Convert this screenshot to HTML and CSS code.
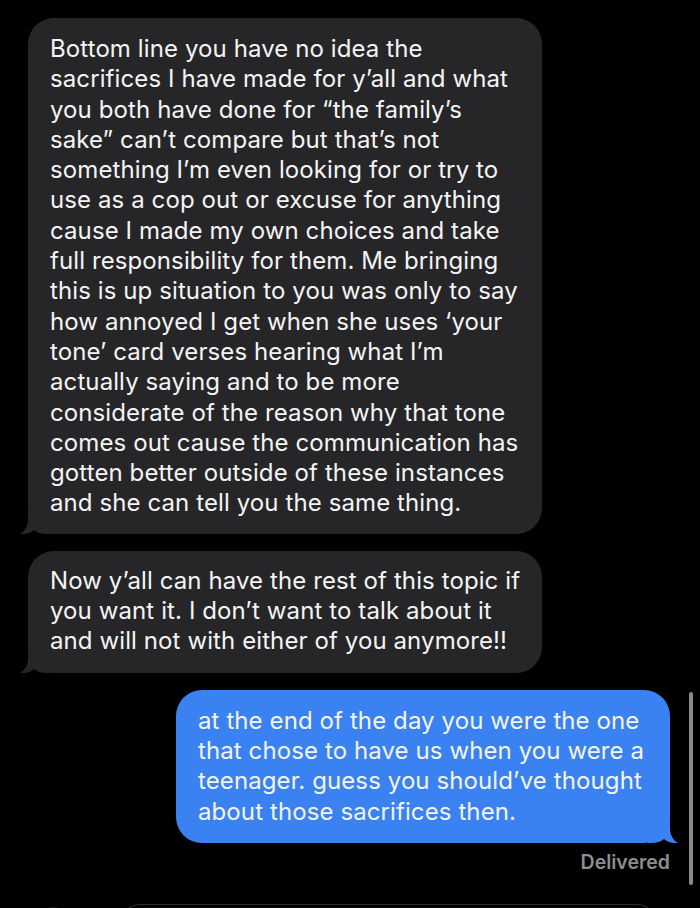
FILE: index.html
```html
<!DOCTYPE html>
<html>
<head>
<meta charset="utf-8">
<link rel="stylesheet" href="styles.css">
</head>
<body>
<div class="screen">
  <div class="thread">
    <div class="bubble in first">
      <p class="msg">Bottom line you have no idea the<br>sacrifices I have made for y’all and what<br>you both have done for “the family’s<br>sake” can’t compare but that’s not<br>something I’m even looking for or try to<br>use as a cop out or excuse for anything<br>cause I made my own choices and take<br>full responsibility for them. Me bringing<br>this is up situation to you was only to say<br>how annoyed I get when she uses ‘your<br>tone’ card verses hearing what I’m<br>actually saying and to be more<br>considerate of the reason why that tone<br>comes out cause the communication has<br>gotten better outside of these instances<br>and she can tell you the same thing.</p>
      <svg class="tail tail-in" viewBox="0 0 30 24" width="30" height="24"><path d="M8,0 V9 C8,16 5,21 0,24 C6,24.5 11,23 14,20 C17,22.5 21,24 27,24 H30 V0 Z"/></svg>
    </div>
    <div class="bubble in second">
      <p class="msg">Now y’all can have the rest of this topic if<br>you want it. I don’t want to talk about it<br>and will not with either of you anymore!!</p>
      <svg class="tail tail-in" viewBox="0 0 30 24" width="30" height="24"><path d="M8,0 V9 C8,16 5,21 0,24 C6,24.5 11,23 14,20 C17,22.5 21,24 27,24 H30 V0 Z"/></svg>
    </div>
    <div class="bubble out">
      <p class="msg">at the end of the day you were the one<br>that chose to have us when you were a<br>teenager. guess you should’ve thought<br>about those sacrifices then.</p>
      <svg class="tail tail-out" viewBox="0 0 30 24" width="30" height="24"><path d="M8,0 V9 C8,16 5,21 0,24 C6,24.5 11,23 14,20 C17,22.5 21,24 27,24 H30 V0 Z"/></svg>
    </div>
    <div class="status">Delivered</div>
  </div>
  <div class="composer">
    <div class="plus"></div>
    <div class="field"></div>
  </div>
  <div class="scrollbar"></div>
</div>
</body>
</html>
```
FILE: styles.css
```css
html, body {
  margin: 0;
  padding: 0;
  background: #000;
}
.screen {
  position: relative;
  width: 700px;
  height: 908px;
  overflow: hidden;
  background: #000;
  font-family: Inter, "Noto Sans", "Liberation Sans", sans-serif;
}
.thread {
  display: flex;
  flex-direction: column;
  padding-top: 18px;
}
.bubble {
  position: relative;
  border-radius: 26px;
  box-sizing: border-box;
}
.msg {
  margin: 0;
  font-size: 24px;
  line-height: 30.3px;
  color: #f4f4f4;
  white-space: nowrap;
  letter-spacing: 0.1px;
}
.in {
  background: #262628;
  align-self: flex-start;
  margin-left: 28px;
  width: 514px;
  padding: 16px 10px 15px 22px;
}
.in .tail { fill: #262628; }
.second {
  margin-top: 17px;
  padding: 15px 10px 16px 22px;
}
.out {
  background: #3a82f1;
  align-self: flex-start;
  margin-left: 176px;
  margin-top: 17px;
  width: 494px;
  padding: 16px 10px 16px 22px;
}
.out .tail { fill: #3a82f1; }
.tail {
  position: absolute;
  bottom: 0;
  display: block;
}
.tail-in {
  left: -8px;
}
.tail-out {
  right: -8px;
  transform: scaleX(-1);
}
.status {
  align-self: flex-end;
  margin-right: 30px;
  margin-top: 7px;
  font-size: 19.5px;
  line-height: 24px;
  font-weight: 600;
  color: #8d8d92;
}
.composer {
  display: flex;
  align-items: flex-start;
  margin-top: 30px;
  padding-left: 40px;
  gap: 54px;
}
.plus {
  width: 26px;
  height: 26px;
  border-radius: 50%;
  background: #1c1c1e;
  flex: none;
  margin-top: 3px;
}
.field {
  width: 537px;
  height: 40px;
  border: 1.5px solid #2f2f31;
  border-radius: 20px;
  box-sizing: border-box;
  flex: none;
}
.scrollbar {
  position: absolute;
  right: 7px;
  top: 692px;
  width: 4px;
  height: 193px;
  border-radius: 2px;
  background: #8a8a8c;
}
```
